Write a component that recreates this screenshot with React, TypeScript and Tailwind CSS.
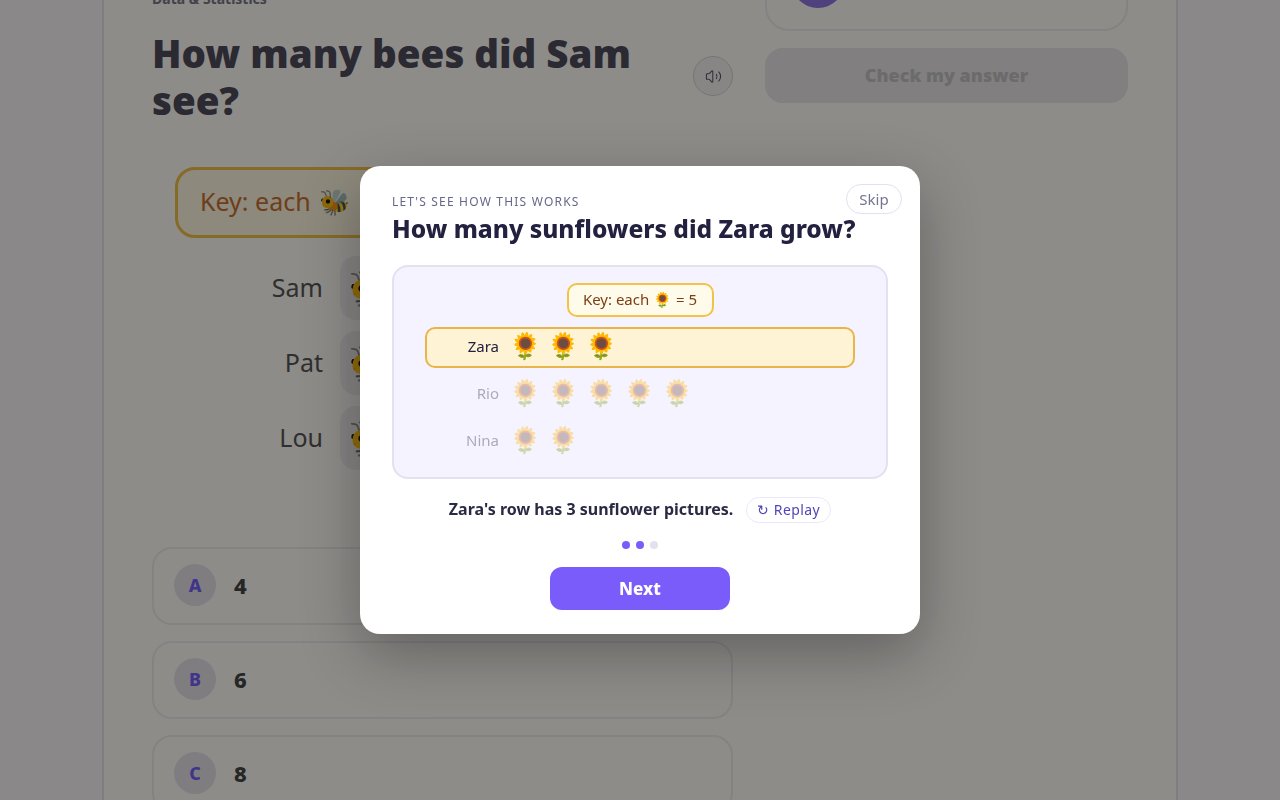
import { Volume2 } from 'lucide-react';

const font = "font-['Noto_Sans',sans-serif]";

const pictoRows = [
  { name: 'Sam', count: 2 },
  { name: 'Pat', count: 2 },
  { name: 'Lou', count: 2 },
];

const answers = [
  { letter: 'A', value: '4' },
  { letter: 'B', value: '6' },
  { letter: 'C', value: '8' },
];

const demoRows = [
  { name: 'Zara', count: 3, active: true },
  { name: 'Rio', count: 5, active: false },
  { name: 'Nina', count: 2, active: false },
];

function QuestionPage() {
  return (
    <div className="flex h-[800px] justify-center overflow-hidden bg-[#f9f7ff]">
      <div className="flex h-[900px] w-[1076px] shrink-0 gap-8 border-x-2 border-[#e2e0ec] bg-white px-[48px]">
        {/* Question column */}
        <div className="-mt-[11px] w-[581px] shrink-0">
          <p className="h-5 text-sm leading-5 font-bold text-[#6b6980]">Data &amp; Statistics</p>
          <div className="mt-[21px] flex items-start justify-between">
            <h1 className="w-[500px] text-[38.5px] leading-[47px] font-black text-[#3a3850]">
              How many bees did Sam see?
            </h1>
            <button className="mt-[26px] flex h-10 w-10 items-center justify-center rounded-full border border-[#d0d0d3] bg-[#f4f3f6] text-[#45435f]">
              <Volume2 size={17} strokeWidth={1.5} />
            </button>
          </div>
          <div className="mt-[43px] ml-[23px] flex h-[71px] w-[330px] items-center gap-[7px] rounded-[20px] border-[3px] border-[#f0bc3a] bg-[#fff8e6] px-[22px] pb-[2px] text-[25px] whitespace-nowrap text-[#c2621f]">
            <span>Key: each</span>
            <span className="ml-[1px]">🐝</span>
            <span className="ml-[3px]">= 2</span>
          </div>
          <div className="mt-[18px] flex flex-col gap-[11px]">
            {pictoRows.map((row) => (
              <div key={row.name} className="flex h-16 items-center gap-[17px]">
                <span className="w-[171px] text-right text-[25px] text-[#45454b]">{row.name}</span>
                <div className="flex h-16 w-[300px] items-center gap-2 rounded-2xl bg-[#efeef2] px-2 text-[38px]">
                  {Array.from({ length: row.count }).map((_, i) => (
                    <span key={i}>🐝</span>
                  ))}
                </div>
              </div>
            ))}
          </div>
          <div className="mt-[77px] flex flex-col gap-4">
            {answers.map((answer) => (
              <div
                key={answer.letter}
                className="flex h-[78px] items-center gap-[18px] rounded-[20px] border-2 border-[#eceaf0] bg-white pb-[2px] pl-5"
              >
                <span className="flex h-[42px] w-[42px] items-center justify-center rounded-full bg-[#e4e1ee] text-lg font-extrabold text-[#6551ff]">
                  {answer.letter}
                </span>
                <span className="text-[22px] font-extrabold text-[#33323a]">{answer.value}</span>
              </div>
            ))}
          </div>
        </div>

        {/* Side column */}
        <div className="-mt-[60px] w-[363px] shrink-0">
          <div className="h-[91px] rounded-3xl border-2 border-[#eceaf2] bg-white pt-[12px] pl-6">
            <div className="h-[54px] w-[54px] rounded-full bg-[#8268e8]" />
          </div>
          <button className="mt-[17px] h-[55px] w-full rounded-[18px] bg-[#e7e5ea] pb-[2px] text-lg font-black text-[#bdbcc4]">
            Check my answer
          </button>
        </div>
      </div>
    </div>
  );
}

function TutorialModal() {
  return (
    <div className="absolute inset-0 flex items-center justify-center bg-[#1b1913]/50 backdrop-blur-[0.5px]">
      <div className="relative h-[468px] w-[560px] rounded-[20px] bg-white px-8 pt-[28px] shadow-[0_20px_60px_rgba(0,0,0,0.3)]">
        <button className="absolute top-[18px] right-[18px] h-[30px] w-14 rounded-full border border-[#e2e1ee] text-[15px] text-[#75748e]">
          Skip
        </button>
        <p className="text-xs leading-[16px] tracking-[0.1em] text-[#67678a] uppercase">Let's see how this works</p>
        <h2 className="mt-[4px] text-[24.5px] leading-[30px] font-extrabold text-[#22213f]">
          How many sunflowers did Zara grow?
        </h2>

        <div className="mt-[21px] flex h-[214px] flex-col items-center rounded-2xl border-2 border-[#e2e1f0] bg-[#f5f3ff] pt-4">
          <div className="flex h-[34px] w-[147px] items-center justify-center rounded-[10px] border-2 border-[#f3c246] bg-[#fffbeb] pb-[1px] text-[15px] text-[#7c3f12]">
            Key: each 🌻 = 5
          </div>
          <div className="mt-[10px] flex w-[430px] flex-col gap-[6px]">
            {demoRows.map((row) => (
              <div
                key={row.name}
                className={
                  row.active
                    ? 'flex h-[41px] items-center rounded-[10px] border-2 border-[#e8b54a] bg-[#fff3d6]'
                    : 'flex h-[41px] items-center rounded-[10px] border-2 border-transparent opacity-35'
                }
              >
                <span className="mb-[2px] w-[72px] text-right text-[15px] text-[#22213f]">{row.name}</span>
                <div className="mb-[5px] ml-[10px] flex gap-[12px] text-[26px] leading-none">
                  {Array.from({ length: row.count }).map((_, i) => (
                    <span key={i} className="w-[26px] text-center">🌻</span>
                  ))}
                </div>
              </div>
            ))}
          </div>
        </div>

        <div className="mt-[18px] flex items-center justify-center gap-[13px]">
          <span className="mb-[2px] text-[16px] font-bold text-[#2a2a45]">Zara's row has 3 sunflower pictures.</span>
          <button className="h-[26px] rounded-full border border-[#ebe9fb] px-[10px] text-sm tracking-[0.03em] text-[#4f46b8]">
            ↻ Replay
          </button>
        </div>

        <div className="mt-[18px] flex justify-center gap-[6px]">
          <span className="h-2 w-2 rounded-full bg-[#7a5cfa]" />
          <span className="h-2 w-2 rounded-full bg-[#7a5cfa]" />
          <span className="h-2 w-2 rounded-full bg-[#e2e1ee]" />
        </div>

        <div className="mt-[18px] flex justify-center">
          <button className="h-[43px] w-[180px] rounded-xl bg-[#7a5cfa] text-[17px] font-extrabold text-white">Next</button>
        </div>
      </div>
    </div>
  );
}

export default function App() {
  return (
    <div className={`relative h-[800px] overflow-hidden ${font}`}>
      <QuestionPage />
      <TutorialModal />
    </div>
  );
}
